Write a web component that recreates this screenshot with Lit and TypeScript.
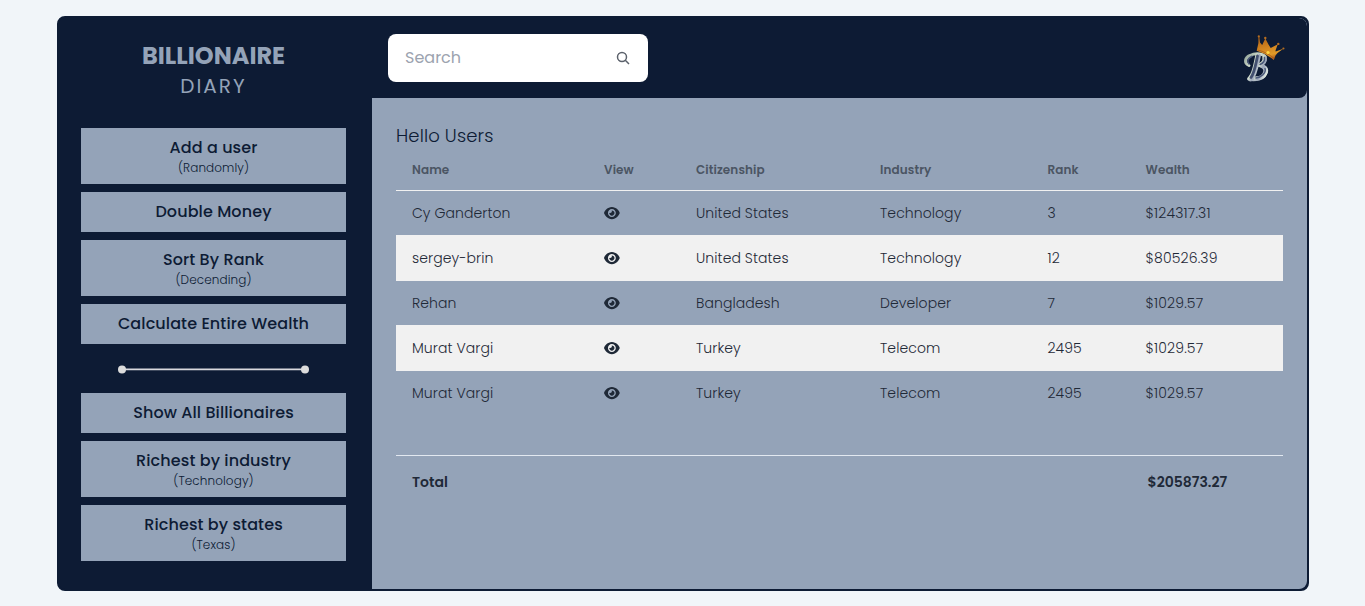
import { LitElement, html, css, svg } from "lit";
import { customElement } from "lit/decorators.js";

type Action = { label: string; note?: string };
const tools: Action[] = [
  { label: "Add a user", note: "(Randomly)" },
  { label: "Double Money" },
  { label: "Sort By Rank", note: "(Decending)" },
  { label: "Calculate Entire Wealth" },
];
const filters: Action[] = [
  { label: "Show All Billionaires" },
  { label: "Richest by industry", note: "(Technology)" },
  { label: "Richest by states", note: "(Texas)" },
];

const columns = ["Name", "View", "Citizenship", "Industry", "Rank", "Wealth"];
const rows = [
  ["Cy Ganderton", "United States", "Technology", "3", "$124317.31"],
  ["sergey-brin", "United States", "Technology", "12", "$80526.39"],
  ["Rehan", "Bangladesh", "Developer", "7", "$1029.57"],
  ["Murat Vargi", "Turkey", "Telecom", "2495", "$1029.57"],
  ["Murat Vargi", "Turkey", "Telecom", "2495", "$1029.57"],
];

const eye = svg`<svg class="eye" viewBox="0 0 576 512"><path fill-rule="evenodd" d="M279.6 160.4C282.4 160.1 285.2 160 288 160C341 160 384 202.1 384 256C384 309 341 352 288 352C234.1 352 192 309 192 256C192 253.2 192.1 250.4 192.4 247.6C201.7 252.1 212.5 256 224 256C259.3 256 288 227.3 288 192C288 180.5 284.1 169.7 279.6 160.4zM480.6 112.6C527.4 156 558.7 207.1 573.5 243.7C576.8 251.6 576.8 260.4 573.5 268.3C558.7 304 527.4 355.1 480.6 399.4C433.5 443.2 368.8 480 288 480C207.2 480 142.5 443.2 95.4 399.4C48.6 355.1 17.3 304 2.5 268.3C-.8 260.4-.8 251.6 2.5 243.7C17.3 207.1 48.6 156 95.4 112.6C142.5 68.8 207.2 32 288 32C368.8 32 433.5 68.8 480.6 112.6zM288 112C208.5 112 144 176.5 144 256C144 335.5 208.5 400 288 400C367.5 400 432 335.5 432 256C432 176.5 367.5 112 288 112z"/></svg>`;

@customElement("app-root")
class AppRoot extends LitElement {
  static styles = css`
    :host { display: block; height: 606px; overflow: hidden; box-sizing: border-box; padding: 16px 56px 15px 57px; background: #f1f5f9; color: #1f2937; font-family: Poppins, Inter, sans-serif; font-size: 14px; }
    * { box-sizing: border-box; }
    .frame { display: grid; grid-template-columns: 313px 1fr; height: 575px; background: #0d1b34; border: 2px solid #0d1b34; border-radius: 8px; overflow: hidden; }
    aside { padding: 22px 24px 0 22px; text-align: center; }
    .brand { font-weight: 700; font-size: 24px; line-height: 32px; color: #94a3b8; padding-right: 2px; }
    .sub { font-weight: 400; font-size: 20px; line-height: 28px; letter-spacing: 2px; color: #94a3b8; padding-right: 2px; margin-bottom: 28px; }
    .group { display: grid; gap: 8px; }
    .btn { width: 265px; background: #94a3b8; color: #0d1b34; padding: 8px 0; }
    .label { font-size: 16px; font-weight: 500; line-height: 24px; letter-spacing: .1px; }
    .note { font-size: 12px; font-weight: 300; line-height: 16px; letter-spacing: .1px; }
    .rule { display: block; width: 191px; height: 10px; margin: 20px auto 19px 37px; }
    .main { display: grid; grid-template-rows: 80px 1fr; background: #94a3b8; border-radius: 0 8px 8px 0; overflow: hidden; }
    header { display: flex; justify-content: space-between; align-items: center; background: #0d1b34; border-radius: 0 8px 8px 0; padding: 0 22px 0 16px; }
    .search { display: flex; justify-content: space-between; align-items: center; width: 260px; height: 48px; border-radius: 8px; background: #fff; padding: 0 18px 0 17px; color: #9ca3af; font-size: 16px; font-weight: 400; line-height: 24px; }
    .search svg { width: 14px; height: 14px; }
    .logo { width: 42px; height: 50px; margin-top: 2px; }
    .content { padding: 24px; }
    .hello { font-size: 18px; font-weight: 300; line-height: 28px; letter-spacing: .12px; color: #0d1b34; }
    .line { display: grid; grid-template-columns: 192px 92px 184px 167.5px 98px 1fr; align-items: center; padding-left: 16px; font-weight: 300; font-size: 14px; height: 44px; line-height: 20px; letter-spacing: .08px; }
    .head { height: 41px; border-bottom: 1px solid #f1f1f1; font-size: 12px; font-weight: 600; color: #4b5563; line-height: 16px; letter-spacing: .1px; }
    .money { letter-spacing: .16px; }
    .rows { display: grid; grid-template-rows: 44px 46px 44px 46px 44px; }
    .odd { height: 46px; background: #f1f1f1; }
    .eye { display: block; width: 15.75px; height: 14px; margin-bottom: 1px; fill: #1f2937; }
    .total { display: grid; grid-template-columns: 735.5px 1fr; align-items: center; margin-top: 40px; height: 54px; border-top: 1px solid #e2e8f0; padding-left: 16px; font-size: 14px; font-weight: 600; }
  `;

  private btn(a: Action) {
    return html`<div class="btn"><div class="label">${a.label}</div>${a.note ? html`<div class="note">${a.note}</div>` : ""}</div>`;
  }

  render() {
    return html`<div class="frame">
      <aside>
        <div class="brand">BILLIONAIRE</div>
        <div class="sub">DIARY</div>
        <div class="group">${tools.map((a) => this.btn(a))}</div>
        <svg class="rule" viewBox="0 0 191 10"><path d="M4 5.300H187" stroke="#d9d9de" stroke-width="1.800"/><circle cx="4" cy="5.500" r="4" fill="#dcdcdc"/><circle cx="187" cy="5.500" r="4" fill="#dcdcdc"/></svg>
        <div class="group">${filters.map((a) => this.btn(a))}</div>
      </aside>
      <div class="main">
        <header>
          <div class="search"><span>Search</span>
            <svg viewBox="0 0 14 14" fill="none" stroke="#5b616b" stroke-width="1.500"><circle cx="6" cy="6" r="4.500"/><path d="M9.300 9.300L13 13"/></svg>
          </div>
          <svg class="logo" viewBox="0 0 42 50">
            <defs>
              <linearGradient id="gold" x1="0" y1="0" x2="0.300" y2="1"><stop offset="0" stop-color="#a85d16"/><stop offset=".5" stop-color="#d0821f"/><stop offset=".85" stop-color="#e09a28"/><stop offset="1" stop-color="#b9661a"/></linearGradient>
              <linearGradient id="steel" x1="0" y1="0" x2="1" y2="1"><stop offset="0" stop-color="#8fa096"/><stop offset=".35" stop-color="#d3dfcc"/><stop offset=".6" stop-color="#9aa4b8"/><stop offset="1" stop-color="#e9f3e6"/></linearGradient>
            </defs>
            <g fill="none" stroke-linecap="round" stroke-linejoin="round">
              <path d="M6 31.500C0.500 29 2 23.500 7 21.500C12 19 22.500 19 22.500 24.500C22.500 28.500 19 30.500 16 31.500C21 31.500 24.500 33.500 23.500 38C21.500 44 13 47 5.500 45" stroke="url(#steel)" stroke-width="3"/>
              <path d="M21.500 23C22.500 27.500 19 30 17 31C21 32.500 23.500 35 22.300 38.500C21 42.500 17 44.500 13 44.500" stroke="url(#steel)" stroke-width="4.400"/>
              <path d="M15 22C13 31 12 40 7.500 44.500" stroke="url(#steel)" stroke-width="5.600"/>
              <path d="M14.500 22C12.500 31 11.500 39 8 43.500" stroke="#43506f" stroke-width="2.800"/>
              <path d="M6 30C3.500 27 5 24 9 22.200M21.500 23.500C22 27 19.500 29.500 17 30.500M22 34.500C23.500 39 18 43.500 13 44" stroke="#4a5878" stroke-width="1.500"/>
            </g>
            <path d="M13.700 16.800L15.400 9L15.400 2.500L16.300 2.500L17 8.500L19.200 11L22.300 4.500L25.500 10.500L27.700 14L34.800 10.200L32.500 16.500L32.700 17.500L40.300 14.700L34.500 19L32.500 21.500L30.800 26Q23 19.500 13.700 16.800Z" fill="url(#gold)"/>
            <g fill="#b56d20"><circle cx="15.800" cy="2.400" r="1.100"/><circle cx="22.300" cy="4" r="1.200"/><circle cx="35.300" cy="9.900" r="1.200"/><circle cx="40.400" cy="14.500" r="1.100"/></g>
            <path d="M14.500 16Q24 18 31 24.500" fill="none" stroke="#97491c" stroke-width=".6"/><circle cx="25" cy="18.500" r="1.600" fill="#ffd640"/>
          </svg>
        </header>
        <div class="content">
          <div class="hello">Hello Users</div>
          <div class="line head">${columns.map((c) => html`<span>${c}</span>`)}</div>
          <div class="rows">${rows.map(([name, land, field, rank, wealth], i) => html`<div class="line ${i % 2 ? "odd" : ""}"><span>${name}</span>${eye}<span>${land}</span><span>${field}</span><span>${rank}</span><span class="money">${wealth}</span></div>`)}</div>
          <div class="total"><span>Total</span><span>$205873.27</span></div>
        </div>
      </div>
    </div>`;
  }
}
